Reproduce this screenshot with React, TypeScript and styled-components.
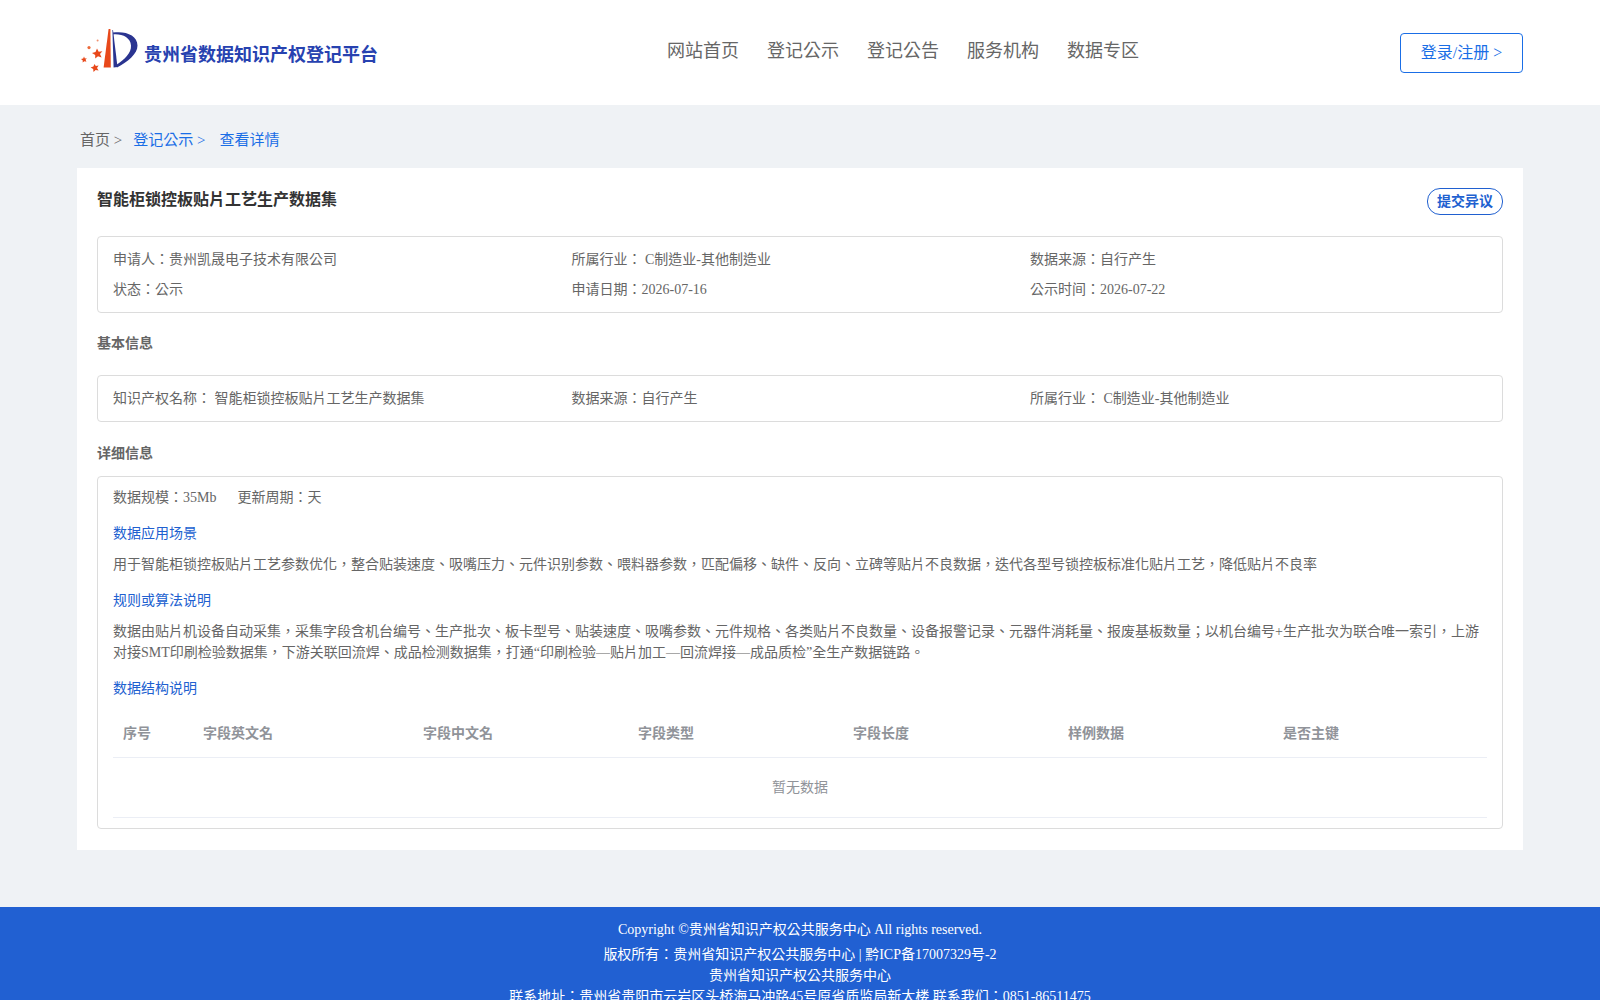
import styled, { createGlobalStyle } from "styled-components";

const GlobalStyle = createGlobalStyle`
  html, body {
    margin: 0;
    padding: 0;
    background: #eff2f5;
    color: #666;
    font-family: "Liberation Serif", "Noto Sans CJK TC", serif;
    font-size: 14px;
    line-height: 21px;
  }
  * { box-sizing: border-box; }
`;

const Header = styled.header`
  display: flex;
  align-items: center;
  height: 105px;
  padding: 0 77px;
  background: #fff;
`;

const Brand = styled.div`
  display: flex;
  align-items: center;
  width: 590px;
`;

const BrandName = styled.span`
  margin-top: 4px;
  font-size: 18px;
  line-height: 24px;
  font-weight: 700;
  color: #2742b0;
`;

const Nav = styled.nav`
  display: flex;
  gap: 28px;
  margin-top: -3px;
`;

const NavItem = styled.a`
  font-size: 18px;
  line-height: 24px;
  color: #666;
`;

const LoginButton = styled.button`
  margin-left: auto;
  width: 123px;
  height: 40px;
  padding: 0;
  border: 1px solid #1a6ee6;
  border-radius: 4px;
  background: #fff;
  color: #1a6ee6;
  font: inherit;
  font-size: 16px;
`;

const Main = styled.main`
  padding: 0 77px;
`;

const Breadcrumb = styled.div`
  display: flex;
  align-items: center;
  height: 63px;
  padding: 8px 0 0 3px;
  font-size: 15px;
`;

const Crumb = styled.span<{ $active?: boolean; $gap: number }>`
  margin-right: ${(p) => p.$gap}px;
  color: ${(p) => (p.$active ? "#1a6ee6" : "#666")};
`;

const Card = styled.section`
  padding: 20px 20px 21px;
  background: #fff;
`;

const TitleRow = styled.div`
  display: flex;
  align-items: flex-start;
  justify-content: space-between;
  margin-bottom: 21px;
`;

const Title = styled.h1`
  margin: 0;
  font-size: 16px;
  line-height: 24px;
  font-weight: 700;
  color: #333;
`;

const ObjectionButton = styled.button`
  width: 76px;
  height: 27px;
  padding: 0;
  border: 1px solid #2060d0;
  border-radius: 13px;
  background: #fff;
  color: #2060d0;
  font: inherit;
  font-weight: 700;
`;

const Box = styled.div`
  padding: 7px 15px 8px;
  border: 1px solid #dcdcdc;
  border-radius: 4px;
`;

const InfoGrid = styled.div`
  display: grid;
  grid-template-columns: repeat(3, 458.5px);
  grid-auto-rows: 30px;
  align-items: center;
`;

const SectionTitle = styled.h2<{ $top: number; $bottom: number }>`
  margin: ${(p) => p.$top}px 0 ${(p) => p.$bottom}px;
  font-size: 14px;
  line-height: 24px;
  font-weight: 700;
  color: #666;
`;

const DetailBox = styled.div`
  padding: 10px 15px;
  border: 1px solid #dcdcdc;
  border-radius: 4px;
`;

const SubTitle = styled.div`
  margin-top: 15px;
  color: #2060d0;
`;

const Paragraph = styled.p`
  margin: 10px 0 0;
`;

const SmallGap = styled.span`
  margin-left: 21px;
`;

const FieldTable = styled.div`
  margin-top: 10px;
`;

const TableHead = styled.div`
  display: grid;
  grid-template-columns: 80px 220px repeat(5, 215px);
  height: 49px;
  align-items: center;
  border-bottom: 1px solid #ebeef5;
`;

const HeadCell = styled.div`
  padding-left: 10px;
  font-weight: 700;
  color: #909399;
`;

const EmptyRow = styled.div`
  display: flex;
  align-items: center;
  justify-content: center;
  height: 60px;
  border-bottom: 1px solid #ebeef5;
  color: #909399;
`;

const Footer = styled.footer`
  margin-top: 57px;
  padding: 12px 0 12px;
  background: #2160d2;
  color: #fff;
  text-align: center;
`;

const Copyright = styled.div`
  margin-bottom: 4px;
`;

const Logo = () => (
  <svg width="67" height="58" viewBox="1 0 67 58" aria-label="logo">
    <path d="M32.6 5 L34.4 5 L34.8 43.5 L27.6 43.5 Z" fill="#e8481a" />
    <path d="M36.4 6 L37 6 L41.5 43 L37.6 43.5 Z" fill="#2a3490" />
    <path
      d="M37 8.6 C49 6.6 61.5 11 61.5 21.5 C61.5 30 52 37.5 41 43.5 L40 41 C48.5 35.5 55.5 29 55 21.5 C54.5 13.5 46 9.6 37.2 10.4 Z"
      fill="#2a3490"
    />
    <polygon
      points="21,24.5 22.7,27.8 26.4,27.2 24,30 25.6,33.4 22,32.3 19.2,34.6 19.2,31 16,29 19.5,28"
      fill="#e8481a"
    />
    <polygon
      points="18.5,40 19.8,42 22.6,41.6 21,44 22.6,46.6 19.6,46 17.5,48 17.2,45 14.6,43.6 17.4,42.6"
      fill="#e8481a"
    />
    <polygon
      points="8,32.6 8.9,34.4 10.8,34.2 9.6,35.8 10.4,37.8 8.4,37.2 6.6,38.4 6.8,36.4 5,35 7.2,34.6"
      fill="#e8481a"
    />
    <circle cx="13" cy="23.6" r="1.6" fill="#ec6a3a" />
    <circle cx="21.6" cy="16.6" r="1" fill="#f09070" />
  </svg>
);

const columns = ["序号", "字段英文名", "字段中文名", "字段类型", "字段长度", "样例数据", "是否主键"];

export default function App() {
  return (
    <>
      <GlobalStyle />
      <Header>
        <Brand>
          <Logo />
          <BrandName>贵州省数据知识产权登记平台</BrandName>
        </Brand>
        <Nav>
          <NavItem>网站首页</NavItem>
          <NavItem>登记公示</NavItem>
          <NavItem>登记公告</NavItem>
          <NavItem>服务机构</NavItem>
          <NavItem>数据专区</NavItem>
        </Nav>
        <LoginButton>登录/注册 &gt;</LoginButton>
      </Header>
      <Main>
        <Breadcrumb>
          <Crumb $gap={11}>首页 &gt;</Crumb>
          <Crumb $active $gap={14}>登记公示 &gt;</Crumb>
          <Crumb $active $gap={0}>查看详情</Crumb>
        </Breadcrumb>
        <Card>
          <TitleRow>
            <Title>智能柜锁控板贴片工艺生产数据集</Title>
            <ObjectionButton>提交异议</ObjectionButton>
          </TitleRow>
          <Box>
            <InfoGrid>
              <span>申请人：贵州凯晟电子技术有限公司</span>
              <span>所属行业： C制造业-其他制造业</span>
              <span>数据来源：自行产生</span>
              <span>状态：公示</span>
              <span>申请日期：2026-07-16</span>
              <span>公示时间：2026-07-22</span>
            </InfoGrid>
          </Box>
          <SectionTitle $top={19} $bottom={19}>基本信息</SectionTitle>
          <Box>
            <InfoGrid>
              <span>知识产权名称： 智能柜锁控板贴片工艺生产数据集</span>
              <span>数据来源：自行产生</span>
              <span>所属行业： C制造业-其他制造业</span>
            </InfoGrid>
          </Box>
          <SectionTitle $top={20} $bottom={10}>详细信息</SectionTitle>
          <DetailBox>
            <div>
              数据规模：35Mb<SmallGap>更新周期：天</SmallGap>
            </div>
            <SubTitle>数据应用场景</SubTitle>
            <Paragraph>
              用于智能柜锁控板贴片工艺参数优化，整合贴装速度、吸嘴压力、元件识别参数、喂料器参数，匹配偏移、缺件、反向、立碑等贴片不良数据，迭代各型号锁控板标准化贴片工艺，降低贴片不良率
            </Paragraph>
            <SubTitle>规则或算法说明</SubTitle>
            <Paragraph>
              数据由贴片机设备自动采集，采集字段含机台编号、生产批次、板卡型号、贴装速度、吸嘴参数、元件规格、各类贴片不良数量、设备报警记录、元器件消耗量、报废基板数量；以机台编号+生产批次为联合唯一索引，上游对接SMT印刷检验数据集，下游关联回流焊、成品检测数据集，打通“印刷检验—贴片加工—回流焊接—成品质检”全生产数据链路。
            </Paragraph>
            <SubTitle>数据结构说明</SubTitle>
            <FieldTable>
              <TableHead>
                {columns.map((c) => (
                  <HeadCell key={c}>{c}</HeadCell>
                ))}
              </TableHead>
              <EmptyRow>暂无数据</EmptyRow>
            </FieldTable>
          </DetailBox>
        </Card>
      </Main>
      <Footer>
        <Copyright>Copyright ©贵州省知识产权公共服务中心 All rights reserved.</Copyright>
        <div>版权所有：贵州省知识产权公共服务中心 | 黔ICP备17007329号-2</div>
        <div>贵州省知识产权公共服务中心</div>
        <div>联系地址：贵州省贵阳市云岩区头桥海马冲路45号原省质监局新大楼 联系我们：0851-86511475</div>
      </Footer>
    </>
  );
}
